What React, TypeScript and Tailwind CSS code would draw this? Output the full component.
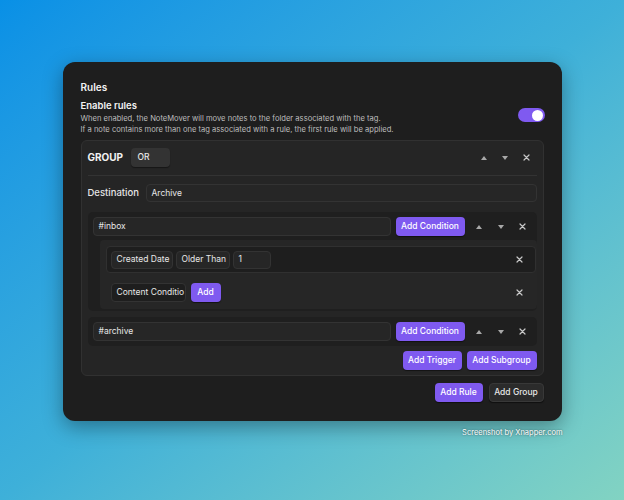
import React from 'react';

const font = { fontFamily: 'Inter, "Noto Sans", sans-serif' };

function Up() {
  return (
    <svg width="6" height="4" viewBox="0 0 6 4">
      <path d="M3 0 L6 4 L0 4 Z" fill="#a8a8a8" />
    </svg>
  );
}

function Down() {
  return (
    <svg width="6" height="4" viewBox="0 0 6 4">
      <path d="M0 0 L6 0 L3 4 Z" fill="#a8a8a8" />
    </svg>
  );
}

function Close() {
  return (
    <svg width="7" height="7" viewBox="0 0 7 7">
      <path d="M1 1 L6 6 M6 1 L1 6" stroke="#c8c8c8" strokeWidth="1.2" strokeLinecap="round" />
    </svg>
  );
}

function IconBtn({ children, w = 'w-[22px]' }: { children: React.ReactNode; w?: string }) {
  return <div className={`${w} h-[19px] flex items-center justify-center`}>{children}</div>;
}

function Purple({ label, w }: { label: string; w: string }) {
  return (
    <div
      className={`${w} h-[19px] shrink-0 rounded-[4px] bg-[#7f5af0] text-white text-[8.5px] font-medium flex items-center justify-center shadow-[0_1px_1px_rgba(0,0,0,0.5)]`}
    >
      {label}
    </div>
  );
}

function Field({ value, className }: { value: string; className: string }) {
  return (
    <div
      className={`${className} h-[18px] rounded-[4px] bg-[#262626] border border-[#333333] text-[#e6e6e6] text-[8.5px] flex items-center px-[5px] whitespace-nowrap overflow-hidden`}
    >
      {value}
    </div>
  );
}

function TriggerHeader({ tag }: { tag: string }) {
  return (
    <div className="flex items-center pl-[5px] pr-[3px]">
      <div className="flex-1 h-[19px] rounded-[4px] bg-[#262626] border border-[#333333] text-[#e6e6e6] text-[8.5px] flex items-center px-[5px]">
        {tag}
      </div>
      <div className="ml-[5px]">
        <Purple label="Add Condition" w="w-[69px]" />
      </div>
      <div className="ml-[3px] flex">
        <IconBtn><Up /></IconBtn>
        <IconBtn><Down /></IconBtn>
        <IconBtn><Close /></IconBtn>
      </div>
    </div>
  );
}

export default function App() {
  return (
    <div
      className="w-[624px] h-[500px] bg-linear-to-br from-[#0890e6] via-[#3eb0d9] to-[#82d3c2] flex flex-col items-center pt-[62px]"
      style={font}
    >
      <div className="w-[499px] h-[359px] rounded-[12px] bg-[#1e1e1e] shadow-[0_6px_20px_rgba(0,0,0,0.35)] px-[18px] pt-[18px]">
        <div className="text-[10px] font-semibold text-[#f2f2f2] leading-[14px]">Rules</div>

        <div className="mt-[5px] flex items-center">
          <div className="flex-1">
            <div className="text-[9.5px] font-semibold text-[#f2f2f2] leading-[14px]">Enable rules</div>
            <div className="text-[7.6px] text-[#bdbdbd] leading-[11px]">
              When enabled, the NoteMover will move notes to the folder associated with the tag.
            </div>
            <div className="text-[7.6px] text-[#bdbdbd] leading-[11px]">
              If a note contains more than one tag associated with a rule, the first rule will be applied.
            </div>
          </div>
          <div className="w-[27px] h-[14px] rounded-full bg-[#7f5af0] flex items-center justify-end pr-[2px] mr-[-1px] mt-[-4px]">
            <div className="w-[11px] h-[11px] rounded-full bg-white" />
          </div>
        </div>

        {/* group */}
        <div className="mt-[5px] rounded-[6px] bg-[#252525] border border-[#313131] px-[6px] pt-[7px] pb-[5px]">
          <div className="flex items-center pb-[8px] border-b border-[#333333]">
            <div className="text-[10px] font-bold text-[#f2f2f2] w-[43px]">GROUP</div>
            <div className="w-[39px] h-[19px] rounded-[4px] bg-[#333333] text-[#e6e6e6] text-[8.5px] font-medium flex items-center px-[7px] shadow-[0_1px_1px_rgba(0,0,0,0.4)]">
              OR
            </div>
            <div className="flex-1" />
            <IconBtn w="w-[21px]"><Up /></IconBtn>
            <IconBtn w="w-[21px]"><Down /></IconBtn>
            <IconBtn w="w-[21px]"><Close /></IconBtn>
          </div>

          <div className="flex items-center mt-[8px]">
            <div className="w-[58px] text-[9.5px] font-medium text-[#e6e6e6]">Destination</div>
            <Field value="Archive" className="flex-1" />
          </div>

          {/* trigger 1 */}
          <div className="mt-[10px] rounded-[5px] bg-[#1f1f1f] pt-[5px] pb-[2px]">
            <TriggerHeader tag="#inbox" />
            <div className="mt-[4px] ml-[12px] rounded-[4px] bg-[#262626] pl-[6px] pr-[1px] pt-[6px] pb-[7px]">
              <div className="flex items-center rounded-[4px] bg-[#1e1e1e] border border-[#303030] pl-[4px] pr-[4px] py-[3px]">
                <Field value="Created Date" className="w-[62px]" />
                <Field value="Older Than" className="w-[54px] ml-[3px]" />
                <Field value="1" className="w-[38px] ml-[3px]" />
                <div className="flex-1" />
                <IconBtn><Close /></IconBtn>
              </div>
              <div className="flex items-center mt-[10px] pl-[5px] pr-[5px]">
                <Field value="Content Conditio" className="w-[75px] !bg-[#1e1e1e] h-[19px]" />
                <div className="ml-[5px]">
                  <Purple label="Add" w="w-[30px]" />
                </div>
                <div className="flex-1" />
                <IconBtn><Close /></IconBtn>
              </div>
            </div>
          </div>

          {/* trigger 2 */}
          <div className="mt-[6px] rounded-[5px] bg-[#1f1f1f] py-[5px]">
            <TriggerHeader tag="#archive" />
          </div>

          <div className="flex justify-end gap-[5px] mt-[5px]">
            <Purple label="Add Trigger" w="w-[59px]" />
            <Purple label="Add Subgroup" w="w-[70px]" />
          </div>
        </div>

        <div className="flex justify-end gap-[6px] mt-[7px]">
          <Purple label="Add Rule" w="w-[48px]" />
          <div className="w-[55px] h-[19px] rounded-[4px] bg-[#2b2b2b] border border-[#383838] text-[#e6e6e6] text-[8.5px] font-medium flex items-center justify-center shadow-[0_1px_1px_rgba(0,0,0,0.5)]">
            Add Group
          </div>
        </div>
      </div>

      <div className="w-[499px] flex justify-end mt-[6px]">
        <div className="text-[7.5px] text-white [text-shadow:0_0_2px_rgba(0,0,0,0.6)] mr-[-1px]">
          Screenshot by Xnapper.com
        </div>
      </div>
    </div>
  );
}
